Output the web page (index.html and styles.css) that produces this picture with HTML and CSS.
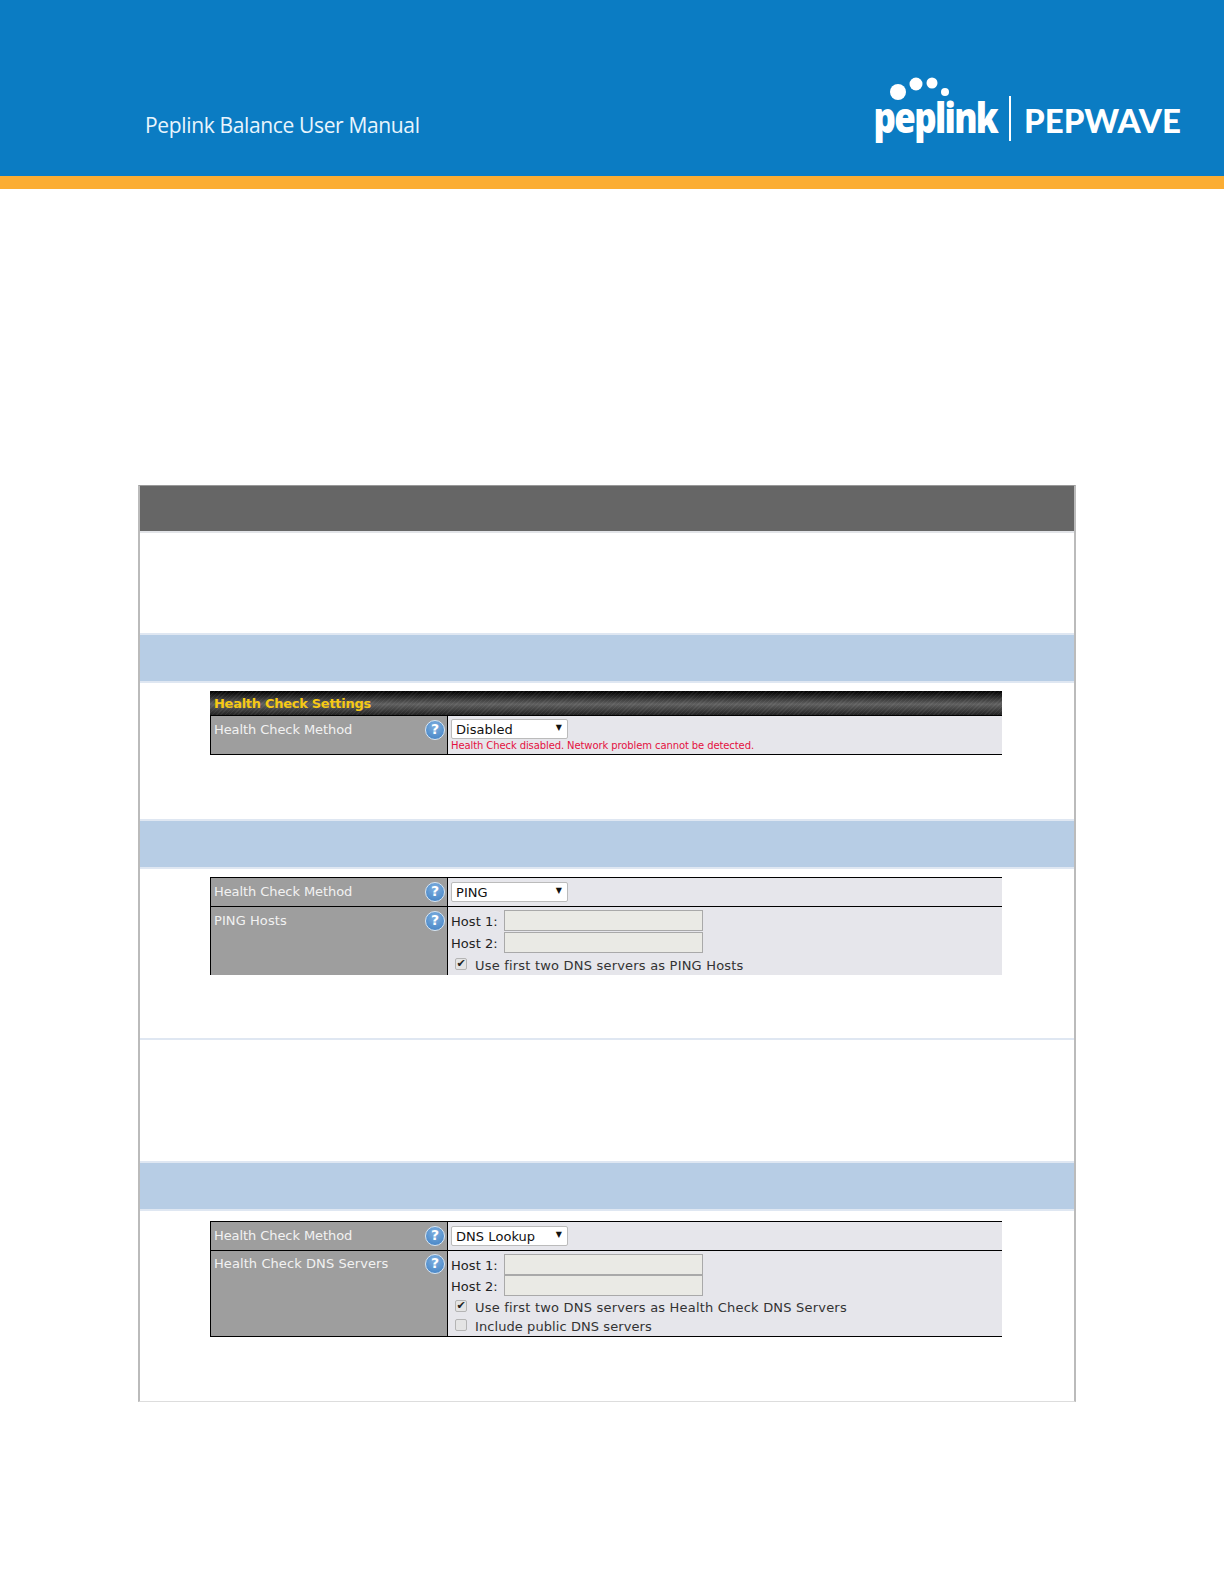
FILE: index.html
```html
<!DOCTYPE html>
<html lang="en">
<head>
<meta charset="utf-8">
<title>Peplink Balance User Manual</title>
<link rel="stylesheet" href="styles.css">
</head>
<body>
<header class="banner">
  <div class="manual-title">Peplink Balance User Manual</div>
  <svg class="logo" width="324" height="72" viewBox="-4 0 324 72" aria-label="Peplink Pepwave">
    <circle cx="22" cy="16" r="8" fill="#fff"/>
    <circle cx="40" cy="8" r="6.5" fill="#fff"/>
    <circle cx="56" cy="7" r="5.5" fill="#fff"/>
    <circle cx="69" cy="16" r="4" fill="#fff"/>
    <text class="logo-peplink" transform="scale(.83 1)" x="-3" y="57">peplink</text>
    <rect x="133" y="20" width="2" height="45" fill="#fff"/>
    <text class="logo-pepwave" x="148" y="57">PEPWAVE</text>
  </svg>
</header>

<main class="doc-table">
  <div class="band band-head"></div>
  <div class="cell cell-100"></div>
  <div class="band"></div>
  <div class="cell cell-136">
    <section class="form form-first">
      <div class="form-title">Health Check Settings</div>
      <div class="form-row row-disabled">
        <div class="label"><span class="tight">Health Check Method</span><span class="help">?</span></div>
        <div class="value">
          <div class="select"><span>Disabled</span><span class="caret">▼</span></div>
          <div class="warning">Health Check disabled. Network problem cannot be detected.</div>
        </div>
      </div>
    </section>
  </div>
  <div class="band"></div>
  <div class="cell cell-169">
    <section class="form form-open">
      <div class="form-row row-method">
        <div class="label"><span class="tight">Health Check Method</span><span class="help">?</span></div>
        <div class="value"><div class="select"><span>PING</span><span class="caret">▼</span></div></div>
      </div>
      <div class="form-row row-hosts">
        <div class="label"><span>PING Hosts</span><span class="help">?</span></div>
        <div class="value">
          <div class="host"><span>Host 1:</span><div class="host-input"></div></div>
          <div class="host"><span>Host 2:</span><div class="host-input"></div></div>
          <div class="option option-first"><span class="check">✔</span><span>Use first two DNS servers as PING Hosts</span></div>
        </div>
      </div>
    </section>
  </div>
  <div class="cell cell-121"></div>
  <div class="band"></div>
  <div class="cell cell-190">
    <section class="form form-last">
      <div class="form-row row-method">
        <div class="label"><span class="tight">Health Check Method</span><span class="help">?</span></div>
        <div class="value"><div class="select"><span>DNS Lookup</span><span class="caret">▼</span></div></div>
      </div>
      <div class="form-row row-dns">
        <div class="label"><span>Health Check DNS Servers</span><span class="help">?</span></div>
        <div class="value">
          <div class="host"><span>Host 1:</span><div class="host-input"></div></div>
          <div class="host"><span>Host 2:</span><div class="host-input"></div></div>
          <div class="option option-first"><span class="check">✔</span><span>Use first two DNS servers as Health Check DNS Servers</span></div>
          <div class="option option-plain"><span class="check"></span><span>Include public DNS servers</span></div>
        </div>
      </div>
    </section>
  </div>
</main>
</body>
</html>
```
FILE: styles.css
```css
* { box-sizing: border-box; }
html, body { margin: 0; padding: 0; background: #fff; }
body { height: 1584px; overflow: hidden; font-family: "DejaVu Sans", Verdana, sans-serif; }

.banner {
  height: 189px;
  background: #0b7cc3;
  border-bottom: 13px solid #fbad33;
  display: flex;
  justify-content: space-between;
  align-items: flex-start;
  padding: 0 28px 0 145px;
}
.manual-title {
  margin-top: 109px;
  font-family: "Open Sans", "Noto Sans", sans-serif;
  font-size: 21px;
  line-height: 32px;
  letter-spacing: -0.35px;
  color: #e8f5fd;
  white-space: nowrap;
}
.logo { margin-top: 76px; flex: none; }
.logo-peplink {
  font-family: "Open Sans", sans-serif;
  font-weight: 800;
  font-size: 42px;
  letter-spacing: -2px;
  fill: #fff;
}
.logo-pepwave {
  font-family: "Lato", sans-serif;
  font-weight: 900;
  font-size: 33px;
  letter-spacing: 0;
  fill: #fff;
}

.doc-table {
  width: 938px;
  margin: 296px 0 0 138px;
  border-top: 1px solid #999;
  border-left: 2px solid #bbb;
  border-right: 2px solid #bbb;
  border-bottom: 1px solid #ddd;
}
.band {
  height: 48px;
  background: #b7cde5;
  border-bottom: 2px solid #dfe7f2;
}
.band-head { height: 47px; background: #666; border-bottom-color: #e2e4e8; }
.cell { border-bottom: 2px solid #dfe7f2; }
.cell-100 { height: 102px; }
.cell-136 { height: 138px; }
.cell-169 { height: 171px; }
.cell-121 { height: 123px; }
.cell-190 { height: 190px; border-bottom: 0; }

.form { width: 792px; margin-left: 70px; font-size: 13px; }
.form-first { padding-top: 8px; }
.form-open { padding-top: 8px; }
.form-last { padding-top: 10px; }

.form-title {
  height: 25px;
  padding-left: 4px;
  border-bottom: 1px solid #000;
  font-weight: 700;
  font-size: 13px;
  letter-spacing: -0.28px;
  line-height: 25px;
  color: #f6c915;
  background:
    repeating-linear-gradient(135deg, rgba(255,255,255,.06) 0 1px, transparent 1px 3px),
    linear-gradient(#000, #606060 55%, #222);
}
.form-row {
  display: grid;
  grid-template-columns: 238px 1fr;
  border-top: 1px solid #000;
}
.form-title + .form-row { border-top: 0; }
.row-disabled { height: 39px; border-bottom: 1px solid #000; }
.row-method { height: 29px; }
.row-hosts { height: 69px; }
.row-dns { height: 87px; border-bottom: 1px solid #000; }

.label {
  display: flex;
  justify-content: space-between;
  padding: 4px 2px 0 3px;
  background: #9e9e9e;
  border-left: 1px solid #000;
  border-right: 1px solid #000;
  color: #f2f2f2;
  letter-spacing: .08px;
  line-height: 20px;
}
.tight { letter-spacing: -.08px; }
.row-dns .label { padding-top: 3px; }
.help {
  flex: none;
  width: 20px;
  height: 20px;
  border-radius: 50%;
  border: 1.5px solid #d6e6f5;
  background: radial-gradient(circle at 50% 30%, #7fb0e0, #3f7fc2);
  color: #fff;
  font-weight: 700;
  font-size: 14px;
  line-height: 17px;
  text-align: center;
  letter-spacing: 0;
}
.value { background: #e6e6eb; padding: 2px 0 0 3px; color: #222; letter-spacing: .05px; }
.row-disabled .value { padding-top: 3px; }
.row-method .value { padding-top: 4px; }
.row-dns .value { padding-top: 3px; }

.select {
  width: 117px;
  height: 20px;
  display: flex;
  justify-content: space-between;
  align-items: center;
  padding: 1px 5px 0 4px;
  background: #fff;
  border: 1px solid #bbb;
  border-radius: 2px;
  color: #111;
  line-height: 18px;
}
.caret { font-size: 8px; line-height: 12px; margin-bottom: 4px; }
.warning {
  margin-top: 0;
  font-size: 10px;
  line-height: 13px;
  color: #e4113f;
  letter-spacing: -.1px;
  white-space: nowrap;
}
.host { display: flex; align-items: center; height: 22px; }
.row-dns .host { height: 21px; }
.host > span:first-child { width: 53px; padding-top: 2px; }
.host-input {
  width: 199px;
  height: 21px;
  background: #eaeae5;
  border: 1px solid #a9a9a9;
}
.option {
  display: flex;
  align-items: center;
  height: 19px;
  padding-left: 4px;
  white-space: nowrap;
  color: #333;
  letter-spacing: .2px;
}
.option-plain { letter-spacing: .08px; }
.option-first { margin-top: 3px; }
.row-dns .option-first { margin-top: 2px; }
.check {
  flex: none;
  width: 12px;
  height: 12px;
  margin-right: 8px;
  margin-top: -3px;
  border: 1px solid #b4b4b4;
  border-radius: 2px;
  background: #e4e4e4;
  font-size: 11px;
  line-height: 10px;
  text-align: center;
  color: #222;
  letter-spacing: 0;
}
```
